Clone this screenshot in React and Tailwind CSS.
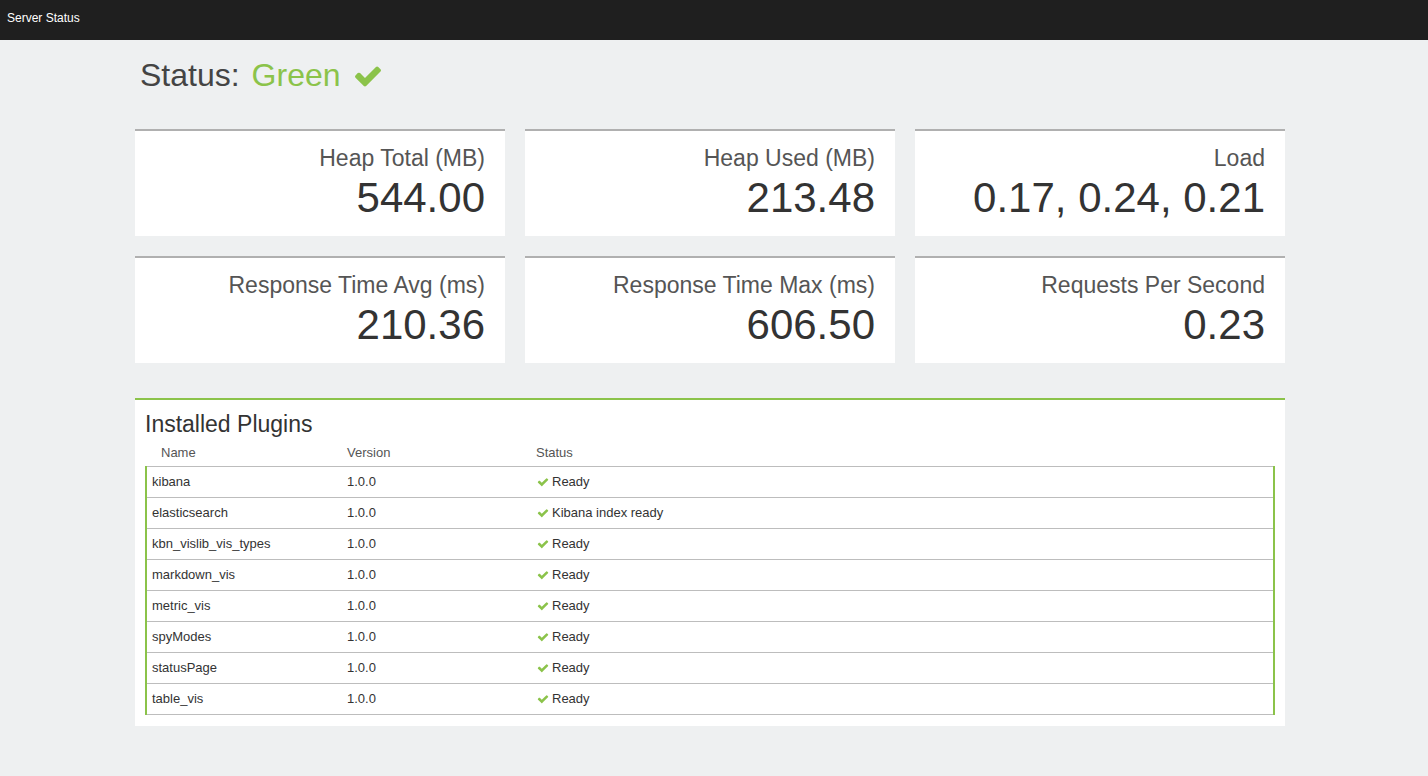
import React from "react";

const metrics = [
  { label: "Heap Total (MB)", value: "544.00" },
  { label: "Heap Used (MB)", value: "213.48" },
  { label: "Load", value: "0.17, 0.24, 0.21" },
  { label: "Response Time Avg (ms)", value: "210.36" },
  { label: "Response Time Max (ms)", value: "606.50" },
  { label: "Requests Per Second", value: "0.23" },
];

const plugins = [
  { name: "kibana", version: "1.0.0", status: "Ready" },
  { name: "elasticsearch", version: "1.0.0", status: "Kibana index ready" },
  { name: "kbn_vislib_vis_types", version: "1.0.0", status: "Ready" },
  { name: "markdown_vis", version: "1.0.0", status: "Ready" },
  { name: "metric_vis", version: "1.0.0", status: "Ready" },
  { name: "spyModes", version: "1.0.0", status: "Ready" },
  { name: "statusPage", version: "1.0.0", status: "Ready" },
  { name: "table_vis", version: "1.0.0", status: "Ready" },
];

const Check = ({ size = 12 }) => (
  <svg width={size} height={size} viewBox="0 0 1792 1792" fill="#8bc34a">
    <path d="M1671 566q0 40-28 68l-724 724-136 136q-28 28-68 28t-68-28l-136-136-362-362q-28-28-28-68t28-68l136-136q28-28 68-28t68 28l294 295 656-657q28-28 68-28t68 28l136 136q28 28 28 68z" />
  </svg>
);

const App = () => {
  const Cards = metrics.map((item, index) => (
    <div className="bg-white border-t-2 border-[#b0b0b0] pt-[15px] pr-[20px] pb-[15px] text-right" key={index}>
      <div className="text-[23px] leading-[24px] text-[#555]">{item.label}</div>
      <div className="text-[42px] leading-[46px] mt-[5px] text-[#333]">{item.value}</div>
    </div>
  ));

  const Rows = plugins.map((item, index) => (
    <div className="grid grid-cols-[195px_189px_1fr] h-[31px] items-center border-t border-[#bdbdbd] text-[13px] text-[#333]" key={index}>
      <div className="pl-[5px]">{item.name}</div>
      <div className="pl-[5px]">{item.version}</div>
      <div className="pl-[6px] flex items-center gap-[3px]">
        <Check size={12} />
        <span>{item.status}</span>
      </div>
    </div>
  ));

  return (
    <div className="min-h-[776px] bg-[#eef0f1]" style={{ fontFamily: '"Liberation Sans", Arial, sans-serif' }}>
      <div className="h-[40px] bg-[#1f1f1f] flex items-center px-[7px] pb-[4px]">
        <span className="text-white text-[12px]">Server Status</span>
      </div>

      <div className="w-[1150px] ml-[135px]">
        <div className="flex items-start pl-[5px] pt-[17px] h-[76px] text-[32px] leading-[36px]">
          <span className="text-[#444]">Status:</span>
          <span className="text-[#8bc34a] ml-[12px]">Green</span>
          <span className="ml-[12px] mt-[4px]">
            <Check size={30} />
          </span>
        </div>

        <div className="grid grid-cols-3 gap-[20px] mt-[13px]">
          {Cards}
        </div>

        <div className="bg-white border-t-2 border-[#8bc34a] mt-[35px] pt-[12px] px-[10px] pb-[11px]">
          <h2 className="text-[23px] leading-[24px] text-[#333]">Installed Plugins</h2>
          <div className="grid grid-cols-[195px_189px_1fr] h-[30px] items-center pt-[4px] text-[13px] text-[#555]">
            <div className="pl-[16px]">Name</div>
            <div className="pl-[7px]">Version</div>
            <div className="pl-[7px]">Status</div>
          </div>
          <div className="border-x-2 border-[#8bc34a]">
            <div className="border-b border-[#bdbdbd]">
              {Rows}
            </div>
          </div>
        </div>
      </div>
    </div>
  );
};

export default App;
